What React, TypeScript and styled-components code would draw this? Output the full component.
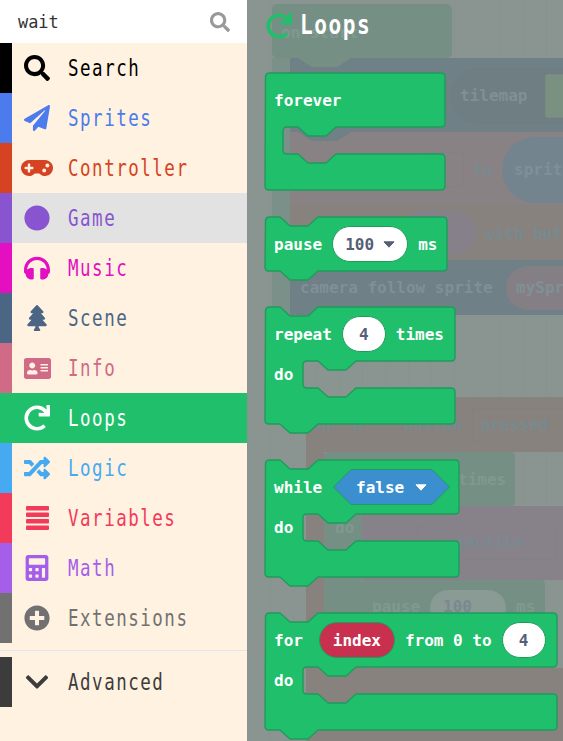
import { ReactNode } from "react";
import styled, { createGlobalStyle } from "styled-components";
import {
  FaAddressCard,
  FaCalculator,
  FaChevronDown,
  FaCircle,
  FaGamepad,
  FaHeadphones,
  FaPaperPlane,
  FaPlusCircle,
  FaRandom,
  FaRedo,
  FaSearch,
  FaTree,
} from "react-icons/fa";

const MONO = `"DejaVu Sans Mono", "Liberation Mono", monospace`;
const LOOPS = "#20bf6b";
const LOOPS_EDGE = "#1f9c5c";

const GlobalStyle = createGlobalStyle`
  html, body { margin: 0; height: 100%; overflow: hidden; background: #8a9490; }
  #root { height: 100%; }
  * { box-sizing: border-box; }
`;

const Page = styled.div`
  display: flex;
  height: 741px;
  overflow: hidden;
  font-family: ${MONO};
`;

/* ---------- sidebar ---------- */

const Sidebar = styled.nav`
  flex: 0 0 247px;
  display: flex;
  flex-direction: column;
  background: #fff2e1;
  position: relative;
  z-index: 2;
`;

const SearchBox = styled.div`
  height: 43px;
  display: flex;
  align-items: center;
  justify-content: space-between;
  padding: 0 17px 0 18px;
  background: #fff;
  color: #999;
  font-size: 20px;
`;

const SearchText = styled.span`
  font-size: 18px;
  color: #333;
  transform: scaleX(0.94);
  transform-origin: left center;
`;

const Row = styled.div<{ $color: string; $active?: boolean; $hover?: boolean }>`
  height: 50px;
  display: flex;
  align-items: center;
  border-left: 12px solid ${(p) => p.$color};
  background: ${(p) => (p.$active ? p.$color : p.$hover ? "#e2e2e2" : "transparent")};
  color: ${(p) => (p.$active ? "#fff" : p.$color)};
`;

const RowIcon = styled.span`
  flex: 0 0 50px;
  display: flex;
  justify-content: center;
`;

// the original face is a tall narrow mono, so squeeze DejaVu to get there
const RowLabel = styled.span`
  margin-left: 6px;
  font-size: 23px;
  letter-spacing: 2px;
  transform: scaleX(0.76);
  transform-origin: left center;
`;

const Divider = styled.hr`
  height: 1px;
  margin: 7px 0 6px;
  border: 0;
  background: #e4e4ee;
`;

const StackIcon = () => (
  <svg width="23" height="24" viewBox="0 0 23 24" fill="currentColor">
    <rect y="0" width="23" height="4.400" rx="1" />
    <rect y="6.500" width="23" height="4.400" rx="1" />
    <rect y="13" width="23" height="4.400" rx="1" />
    <rect y="19.500" width="23" height="4.400" rx="1" />
  </svg>
);

const categories = [
  { name: "Search", color: "#000000", icon: <FaSearch size={26} /> },
  { name: "Sprites", color: "#4b7bec", icon: <FaPaperPlane size={26} /> },
  { name: "Controller", color: "#d54322", icon: <FaGamepad size={32} /> },
  { name: "Game", color: "#8854d0", icon: <FaCircle size={26} />, hover: true },
  { name: "Music", color: "#e30fc0", icon: <FaHeadphones size={26} /> },
  { name: "Scene", color: "#4b6584", icon: <FaTree size={26} /> },
  { name: "Info", color: "#cf6a87", icon: <FaAddressCard size={27} /> },
  { name: "Loops", color: LOOPS, icon: <FaRedo size={26} />, active: true },
  { name: "Logic", color: "#45aaf2", icon: <FaRandom size={26} /> },
  { name: "Variables", color: "#f23a5a", icon: <StackIcon /> },
  { name: "Math", color: "#a55eea", icon: <FaCalculator size={26} /> },
  { name: "Extensions", color: "#717171", icon: <FaPlusCircle size={26} /> },
];

/* ---------- dimmed workspace behind the flyout ---------- */

const Workspace = styled.main`
  flex: 1;
  position: relative;
  overflow: hidden;
  background-color: #8a9490;
  background-image: repeating-linear-gradient(
    90deg,
    rgba(120, 130, 128, 0.12) 0 1px,
    transparent 1px 23px
  );
`;

const Piece = styled.div<{
  $x: number;
  $y: number;
  $w: number;
  $h: number;
  $bg: string;
  $r?: number;
  $line?: boolean;
}>`
  position: absolute;
  left: ${(p) => p.$x - 247}px;
  top: ${(p) => p.$y}px;
  width: ${(p) => p.$w}px;
  height: ${(p) => p.$h}px;
  background: ${(p) => p.$bg};
  border-radius: ${(p) => p.$r ?? 0}px;
  border: ${(p) => (p.$line ? "1px solid rgba(125,125,125,0.35)" : "0")};
`;

const Notch = styled(Piece)`
  clip-path: polygon(0 0, 100% 0, 74% 100%, 26% 100%);
`;

const Ghost = styled.span<{ $x: number; $y: number; $tone: string }>`
  position: absolute;
  left: ${(p) => p.$x - 247}px;
  top: ${(p) => p.$y - 10}px;
  line-height: 20px;
  font-size: 16px;
  font-weight: 700;
  color: ${(p) => p.$tone};
  white-space: pre;
`;

const GREEN = "#768f85";
const BLUE = "#708087";
const ROSE = "#898284";
const BROWN = "#87827d";

const ON_GREEN = "#80998f";
const ON_BLUE = "#7f9096";
const ON_WARM = "#778a90";

const pieces = [
  { x: 272, y: 4, w: 180, h: 54, bg: GREEN, r: 5 },
  { x: 272, y: 58, w: 20, h: 256, bg: "#7b9088" },
  { x: 290, y: 58, w: 273, h: 74, bg: BLUE },
  { x: 450, y: 68, w: 140, h: 56, bg: "#6f7e83", r: 28 },
  { x: 545, y: 74, w: 40, h: 44, bg: "#7a9080", r: 3, line: true },
  { x: 290, y: 132, w: 273, h: 73, bg: ROSE },
  { x: 420, y: 152, w: 44, h: 35, bg: ROSE, r: 3, line: true },
  { x: 502, y: 137, w: 90, h: 66, bg: "#73848f", r: 33 },
  { x: 290, y: 205, w: 273, h: 55, bg: BROWN },
  { x: 400, y: 211, w: 76, h: 44, bg: "#86808a", r: 22 },
  { x: 290, y: 260, w: 273, h: 55, bg: BLUE },
  { x: 506, y: 266, w: 90, h: 44, bg: "#847f85", r: 22 },
  { x: 306, y: 397, w: 257, h: 55, bg: BROWN },
  { x: 472, y: 408, w: 120, h: 34, bg: BROWN, r: 3, line: true },
  { x: 306, y: 452, w: 18, h: 289, bg: BROWN },
  { x: 324, y: 452, w: 191, h: 54, bg: GREEN, r: 4 },
  { x: 324, y: 506, w: 38, h: 162, bg: GREEN },
  { x: 362, y: 506, w: 201, h: 74, bg: "#87818a" },
  { x: 417, y: 526, w: 139, h: 34, bg: "#87818a", r: 3, line: true },
  { x: 362, y: 580, w: 183, h: 54, bg: GREEN, r: 4 },
  { x: 430, y: 590, w: 76, h: 36, bg: "#8a9a94", r: 18 },
  { x: 324, y: 668, w: 239, h: 73, bg: BROWN },
];

const ghosts = [
  { x: 281, y: 33, text: "on start", tone: ON_GREEN },
  { x: 460, y: 96, text: "tilemap", tone: ON_BLUE },
  { x: 473, y: 170, text: "to", tone: ON_WARM },
  { x: 514, y: 170, text: "sprit", tone: ON_BLUE },
  { x: 485, y: 234, text: "with but", tone: ON_WARM },
  { x: 300, y: 288, text: "camera follow sprite", tone: ON_BLUE },
  { x: 516, y: 288, text: "mySpr", tone: ON_BLUE },
  { x: 312, y: 425, text: "on", tone: ON_WARM },
  { x: 353, y: 425, text: "A", tone: ON_WARM },
  { x: 404, y: 425, text: "button", tone: ON_WARM },
  { x: 481, y: 425, text: "pressed", tone: ON_WARM },
  { x: 458, y: 480, text: "times", tone: ON_GREEN },
  { x: 335, y: 528, text: "do", tone: ON_GREEN },
  { x: 427, y: 543, text: "projectile", tone: ON_WARM },
  { x: 372, y: 607, text: "pause", tone: ON_GREEN },
  { x: 443, y: 607, text: "100", tone: ON_WARM },
  { x: 516, y: 607, text: "ms", tone: ON_GREEN },
];

/* ---------- flyout blocks ---------- */

const Flyout = styled.div`
  position: absolute;
  inset: 0;
  padding: 13px 0 0 18px;
  display: flex;
  flex-direction: column;
`;

const FlyoutTitle = styled.h2`
  margin: 0 0 34px 1px;
  height: 26px;
  display: flex;
  align-items: center;
  gap: 8px;
  color: ${LOOPS};
`;

const TitleText = styled.span`
  color: #fff;
  font-size: 27px;
  font-weight: 700;
  line-height: 22px;
  letter-spacing: 2px;
  margin-top: -3px;
  transform: scaleX(0.78);
  transform-origin: left center;
`;

const BlockList = styled.div`
  display: flex;
  flex-direction: column;
  gap: 36px;
`;

const Shell = styled.div<{ $w: number; $h: number; $hat?: boolean }>`
  position: relative;
  width: ${(p) => p.$w}px;
  height: ${(p) => p.$h}px;
  margin-bottom: ${(p) => (p.$hat ? "-9px" : "0")};
  display: flex;
  flex-direction: column;
`;

const ShellDrawing = styled.svg`
  position: absolute;
  left: 0;
  top: 0;
  width: 100%;
  height: 100%;
  overflow: visible;
`;

const BlockRow = styled.div<{ $h: number }>`
  position: relative;
  height: ${(p) => p.$h}px;
  display: flex;
  align-items: center;
  gap: 10px;
  padding-left: 9px;
  color: #fff;
  font-size: 16px;
  font-weight: 700;
  white-space: pre;
`;

const Pill = styled.span<{ $w: number; $bg?: string; $fg?: string; $push?: number }>`
  width: ${(p) => p.$w}px;
  height: 36px;
  margin-left: ${(p) => p.$push ?? 0}px;
  display: flex;
  align-items: center;
  justify-content: center;
  gap: 9px;
  border-radius: 18px;
  border: 1px solid ${LOOPS_EDGE};
  background: ${(p) => p.$bg ?? "#fff"};
  color: ${(p) => p.$fg ?? "#575e75"};
`;

const HexField = styled.span`
  position: relative;
  flex: 0 0 117px;
  height: 36px;
  margin-left: 1px;
  display: flex;
  align-items: center;
  justify-content: center;
`;

const HexDrawing = styled.svg`
  position: absolute;
  inset: 0;
`;

const HexContent = styled.span`
  position: relative;
  display: flex;
  align-items: center;
  gap: 11px;
`;

const Caret = ({ color }: { color: string }) => (
  <svg width="12" height="7" viewBox="0 0 12 7">
    <path d="M1 .8h10L6 6.200z" fill={color} stroke={color} strokeLinejoin="round" />
  </svg>
);

const shellPath = ({ w, inner, hat }: { w: number; inner?: number; hat?: boolean }) => {
  const top = hat ? "" : "H15l10 9h18l10-9";
  let d = `M.5 4q0-4 4-4${top}H${w - 4}q4 0 4 4`;
  if (inner !== undefined) {
    d += `V50q0 4-4 4H${inner + 53}l-10 9h-18l-10-9H${inner + 4}`;
    d += `q-4 0-4 4V77q0 4 4 4H${inner + 15}l10 9h18l10-9H${w - 4}`;
    d += `q4 0 4 4V113`;
  } else {
    d += `V50`;
  }
  d += `q0 4-4 4`;
  d += hat ? "" : "H53l-10 9h-18l-10-9";
  d += `H4q-4 0-4-4z`;
  return d;
};

const Block = ({
  w,
  inner,
  hat,
  children,
  second,
}: {
  w: number;
  inner?: number;
  hat?: boolean;
  children: ReactNode;
  second?: ReactNode;
}) => (
  <Shell $w={w} $h={inner !== undefined ? 117 : 54} $hat={hat}>
    <ShellDrawing>
      <path
        d={shellPath({ w, inner, hat })}
        fill={LOOPS}
        stroke={LOOPS_EDGE}
        strokeWidth="1.4"
        strokeLinejoin="round"
      />
    </ShellDrawing>
    <BlockRow $h={54}>{children}</BlockRow>
    {second && <BlockRow $h={27}>{second}</BlockRow>}
  </Shell>
);

export default function App() {
  return (
    <Page>
      <GlobalStyle />
      <Sidebar>
        <SearchBox>
          <SearchText>wait</SearchText>
          <FaSearch />
        </SearchBox>
        {categories.map((c) => (
          <Row key={c.name} $color={c.color} $active={c.active} $hover={c.hover}>
            <RowIcon>{c.icon}</RowIcon>
            <RowLabel>{c.name}</RowLabel>
          </Row>
        ))}
        <Divider />
        <Row $color="#3c3c3c">
          <RowIcon>
            <FaChevronDown size={26} />
          </RowIcon>
          <RowLabel>Advanced</RowLabel>
        </Row>
      </Sidebar>

      <Workspace>
        {pieces.map((p) => (
          <Piece
            key={`${p.x}-${p.y}`}
            $x={p.x}
            $y={p.y}
            $w={p.w}
            $h={p.h}
            $bg={p.bg}
            $r={p.r}
            $line={p.line}
          />
        ))}
        <Notch $x={298} $y={58} $w={53} $h={9} $bg={GREEN} />
        <Notch $x={298} $y={132} $w={53} $h={9} $bg={BLUE} />
        {ghosts.map((g) => (
          <Ghost key={g.text} $x={g.x} $y={g.y} $tone={g.tone}>
            {g.text}
          </Ghost>
        ))}

        <Flyout>
          <FlyoutTitle>
            <FaRedo size={26} />
            <TitleText>Loops</TitleText>
          </FlyoutTitle>
          <BlockList>
            <Block w={180} inner={18} hat>
              forever
            </Block>
            <Block w={182}>
              pause
              <Pill $w={76}>
                100
                <Caret color="#575e75" />
              </Pill>
              ms
            </Block>
            <Block w={190} inner={38} second="do">
              repeat
              <Pill $w={44}>4</Pill>
              times
            </Block>
            <Block w={194} inner={38} second="do">
              while
              <HexField>
                <HexDrawing width="117" height="36" viewBox="0 0 117 36">
                  <path d="M18 .5h81L116.500 18 99 35.500H18L.5 18z" fill="#3c8fcf" stroke={LOOPS_EDGE} />
                </HexDrawing>
                <HexContent>
                  false
                  <Caret color="#fff" />
                </HexContent>
              </HexField>
            </Block>
            <Block w={292} inner={38} second="do">
              for
              <Pill $w={76} $bg="#c9304f" $fg="#fff" $push={6}>
                index
              </Pill>
              from 0 to
              <Pill $w={44}>4</Pill>
            </Block>
          </BlockList>
        </Flyout>
      </Workspace>
    </Page>
  );
}
